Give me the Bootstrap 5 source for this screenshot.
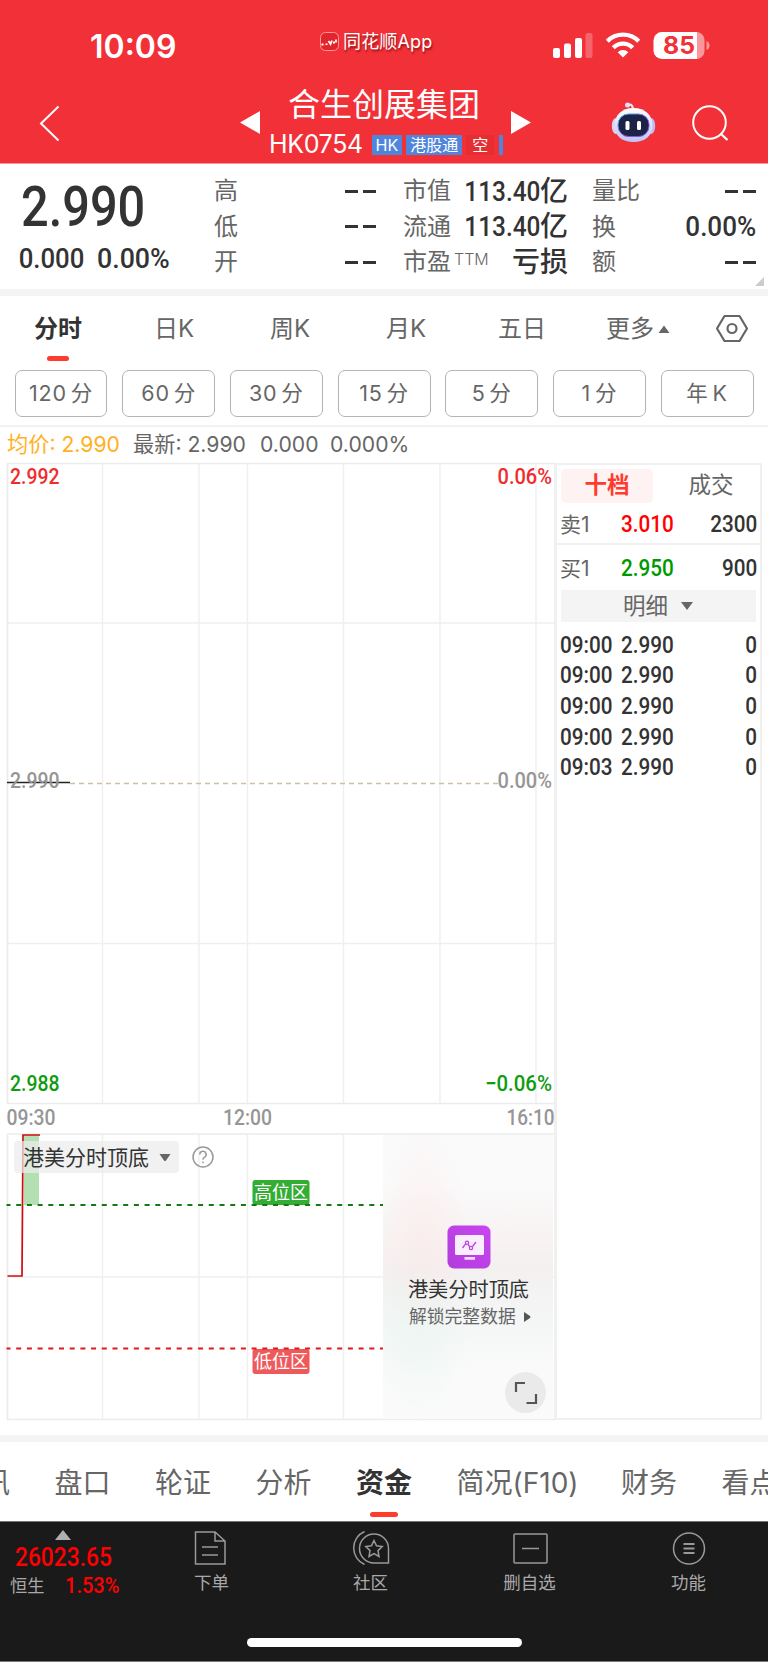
<!DOCTYPE html>
<html lang="zh-CN">
<head>
<meta charset="utf-8">
<meta name="viewport" content="width=device-width, initial-scale=1">
<title>合生创展集团 HK0754</title>
<link rel="stylesheet" href="https://cdn.jsdelivr.net/npm/bootstrap@5.3.0/dist/css/bootstrap.min.css">
<script src="https://cdn.jsdelivr.net/npm/bootstrap@5.3.0/dist/js/bootstrap.bundle.min.js"></script>
<style>
body{width:768px;height:1662px;overflow:hidden;background:#fff;color:#666;font-family:Inter,"Noto Sans CJK SC",sans-serif;line-height:1;white-space:nowrap}
svg{display:block;flex:none;overflow:visible}
.ink{color:#333}
.din{font-family:Roboto,"Noto Sans CJK SC",sans-serif;font-weight:500;display:inline-block;transform:scaleX(.87);transform-origin:left center}
.din-end{transform-origin:right center}
.din-pct{transform:scaleX(.93)}
.hdr{height:164px;background:#f23038;border-bottom:1px solid #f9969a}
.status{height:84px;padding-top:24px}
.clock{width:229px;margin-left:90px;font-size:32px;font-weight:600;height:45px;line-height:45px}
.appname{font-size:18px;line-height:28px;width:210px;letter-spacing:.15px;padding-top:4px;text-shadow:1px 2px 2px rgba(90,0,0,.6)}
.appicon{margin-top:1px}
.navrow{height:79px}
.titleblk{width:251px}
.stock{font-size:32px;line-height:42px;margin-left:-3px}
.coderow{padding:6px 0 0 9px}
.code{font-size:25px;letter-spacing:-.35px;width:102.5px}
.tag{height:20px;line-height:20px;font-size:16px;background:#4f86dc;margin-right:4px;text-align:center}
.tag-red{background:#e62d32;padding:0 6px;margin-right:5px}
.tag-cut{width:3.500px}
.quote{height:125px}
.last{font-size:56px;line-height:64px;margin-top:10px}
.chg{font-size:28px;line-height:30px;margin-top:5px}
.chg .din{transform:scaleX(.92)}
.chg .din+.din{transform:scaleX(.955)}
.qcol{padding-top:9.5px;font-size:24px}
.qcol>div{height:35.5px}
.val{font-size:28px;font-weight:500;color:#333}
.dash{width:31px;height:3px;background:linear-gradient(90deg,#333 0 13px,transparent 13px 18px,#333 18px)}
.ttm{font-size:16px;font-weight:300;margin:1px 0 0 3px;line-height:16px}
.corner{right:4px;bottom:3px}
.band{height:7px;background:#f4f4f4}
.periods{height:66px;font-size:24px}
.periods>div{width:116px;flex:none}
.more{padding-left:26px}
.on{color:#333;font-weight:700}
.bar-on::after{content:"";position:absolute;left:50%;margin-left:-11px;width:22px;height:5.5px;border-radius:3px;background:#ff3b30}
.periods .bar-on::after{bottom:1px}
.pills{padding:8px 14.5px 0;gap:14.7px;height:63px}
.pill{height:47px;border:1.3px solid #b4b4b4;border-radius:7px;font-size:21.5px;letter-spacing:.8px;word-spacing:-3px}
.info{height:38px;border-top:2px solid #f2f2f2;padding-left:7px;font-size:21.200px}
.avg{color:#ffb01e}
.chartbox{width:554px;height:960px}
.chartbox text{font-family:Roboto,"Noto Sans CJK SC",sans-serif}
.side{width:208px;height:957px;border:2px solid #f0f0f0;border-left-width:3px;font-size:21px}
.seg{height:40px;padding:3.5px 0 0 4px;font-size:22.5px;gap:12px}
.seg>div{width:92px;flex:none;height:34px;border-radius:5px}
.seg .sel{background:#fff2f2;color:#ff3b30;font-weight:700}
.lvl{height:38px;padding:0 3px 0 3px}
.n{font-size:23px;color:#333;transform:scaleX(.9)}
.lvl>span:first-child,.tick>span:first-child{width:61px}
.rule{height:2px;background:#f0f0f0}
.detail{height:32px;margin:3px 4px 0;background:#f4f4f4;font-size:22.5px}
.tick{height:30.6px;padding:0 3px 0 3px}
.up{color:#f00}.down{color:#090}
.picker{left:14px;top:678px;width:165px;height:32px;border-radius:4px;background:rgba(235,235,235,.72);font-size:21px;padding-left:9px;color:#333}
.help{left:192px;top:683px}
.lock{left:383px;top:672px;width:170px;height:284px;padding-top:90px;
background:radial-gradient(ellipse 45px 110px at 40px 95px,rgba(255,220,220,.28),transparent),radial-gradient(ellipse 50px 80px at 35px 205px,rgba(218,242,232,.3),transparent),linear-gradient(180deg,#fafafa 0 18%,#f8f2f2 38%,#f4f0f0 47%,#f2f3f2 55%,#f5f7f6 68%,#fafafa 85%)}
.lock-t{font-size:20.2px;margin-top:10px;height:23px;margin-left:1px}
.lock-s{font-size:17.8px;margin:4px 0 0 26px;height:22px}
.expand{left:505px;top:909px}
.sections{height:79px;gap:44.5px;font-size:28px;margin-left:-46px;padding-top:2px}
.sections>span{height:77px}
.sections .bar-on::after{bottom:4px;width:28px;margin-left:-14px}
.wide{margin-right:-2px}
.foot{height:141px;background:#1a1a1a;color:#a9a9a9;border-top:1px solid #777;border-bottom:1px solid #777}
.idx{width:132px;color:#f00}
.idx-n{font-size:25px;line-height:26px;margin:5px 0 0 15px;transform:scaleX(.91)}
.idx-s{font-size:17.3px;color:#a9a9a9}
.idx-s>span:first-child{width:65px;padding-left:10px}
.idx-s .din{font-size:22px;transform:scaleX(.91)}
.item{width:159px;font-size:17.5px;padding-top:8px}
.item svg{height:36px;margin-bottom:8px}
.homebar{width:275px;height:9px;border-radius:5px;background:#fff;margin:1px auto 0 247px}
</style>
</head>
<body>
<header class="hdr text-white">
  <div class="status d-flex align-items-start">
    <div class="clock">10:09</div>
    <div class="d-flex align-items-center">
      <svg class="appicon" width="24" height="28" viewBox="0 0 24 28" fill="none"><rect x="1.500" y="5.500" width="18" height="18" rx="5" stroke="#ff9a9a" fill="#e3242b"/><path d="M2.500 17.500h2M6.500 17.500l2-.500M9.500 14l2 3 1.500-3.500M14 15.500h2M17 12.500v3" stroke="#fff" stroke-width="1.800"/></svg>
      <span class="appname">同花顺App</span>
    </div>
    <svg width="160" height="40" viewBox="553 24 160 40" fill="#fff">
      <rect x="553" y="48" width="7" height="10" rx="2"/><rect x="564" y="43.500" width="7" height="14.500" rx="2"/><rect x="575" y="38" width="7" height="20" rx="2"/><rect x="585.500" y="33" width="7" height="25" rx="2" opacity=".25"/>
      <path d="M623 57.500l-5.300-5.300a7.500 7.500 0 0 1 10.600 0z"/>
      <g fill="none" stroke="#fff" stroke-width="4.300"><path d="M613.300 47.700a13.600 13.600 0 0 1 19.400 0"/><path d="M607.300 41.200a22 22 0 0 1 31.400 0"/></g>
      <path d="M662 32h35v27h-35a8.500 8.500 0 0 1-8.500-8.500v-10a8.500 8.500 0 0 1 8.500-8.500z"/><path d="M697 32a8 8 0 0 1 7.500 8v11a8 8 0 0 1-7.500 8z" opacity=".5"/><path d="M706.500 41q3 1 3 4.500t-3 4.500z" opacity=".5"/>
      <text x="663" y="54" font-size="24" font-weight="700" fill="#f23038" textLength="32" lengthAdjust="spacingAndGlyphs">85</text>
    </svg>
  </div>
  <div class="navrow d-flex">
    <svg width="240" height="70" viewBox="0 84 240 70"><path d="M58.500 106.500L41 123.500l17.500 17" fill="none" stroke="#fff" stroke-width="2"/></svg>
    <svg width="20" height="70" viewBox="240 84 20 70"><path d="M240 122.500l20-11.500v23z" fill="#fff"/></svg>
    <div class="titleblk">
      <div class="stock text-center">合生创展集团</div>
      <div class="coderow d-flex align-items-center">
        <span class="code">HK0754</span><span class="tag px-1">HK</span><span class="tag px-1">港股通</span><span class="tag tag-red">空</span><span class="tag tag-cut"></span>
      </div>
    </div>
    <svg width="101" height="70" viewBox="511 84 101 70"><path d="M531 122.500l-20-11.500v23z" fill="#fff"/></svg>
    <svg width="81" height="70" viewBox="612 84 81 70">
      <defs><linearGradient id="shell" x1="0" y1="0" x2="0" y2="1"><stop offset="0" stop-color="#fff"/><stop offset="1" stop-color="#bfc3f2"/></linearGradient><linearGradient id="rim" x1="0" y1="0" x2="1" y2="1"><stop offset="0" stop-color="#35c9e8"/><stop offset=".6" stop-color="#9a4cf0"/><stop offset="1" stop-color="#5b5cf5"/></linearGradient></defs>
      <path d="M627 105.500q5-3 6 3" fill="none" stroke="#e6e6fa" stroke-width="2.200"/><circle cx="627.500" cy="105" r="2.500" fill="#e2e0fa"/>
      <ellipse cx="616" cy="126" rx="4.200" ry="8" fill="#d5d4f7"/><ellipse cx="651" cy="126" rx="4.200" ry="8" fill="#b9bdf2"/>
      <path d="M633.500 108c12 0 19 7.500 19 17.500s-7 16.500-19 16.500-19-6.500-19-16.500 7-17.500 19-17.500z" fill="url(#shell)"/>
      <rect x="618" y="114" width="31" height="22.500" rx="10.500" fill="#1d2247" stroke="url(#rim)" stroke-width="1"/>
      <rect x="625.500" y="121" width="4" height="9" rx="1.500" fill="#fff"/><rect x="637" y="121" width="4" height="9" rx="1.500" fill="#fff"/>
    </svg>
    <svg width="40" height="70" viewBox="693 84 40 70" fill="none" stroke="#fff" stroke-width="2"><circle cx="709.500" cy="122.500" r="16.300"/><path d="M720.500 133.500l7 6.500" stroke-width="2.300"/></svg>
  </div>
</header>

<section class="quote d-flex position-relative">
  <div class="ink ps-3" style="width:214px">
    <div class="last"><span class="din">&#8202;2.990</span></div>
    <div class="chg d-flex"><span class="din" style="width:81px">&#8202;0.000</span><span class="din">0.00%</span></div>
  </div>
  <div class="qcol" style="width:162px">
    <div class="d-flex align-items-center justify-content-between"><span>高</span><i class="dash"></i></div>
    <div class="d-flex align-items-center justify-content-between"><span>低</span><i class="dash"></i></div>
    <div class="d-flex align-items-center justify-content-between"><span>开</span><i class="dash"></i></div>
  </div>
  <div class="qcol" style="width:165px;margin-left:27px">
    <div class="d-flex align-items-center justify-content-between"><span>市值</span><span class="val"><span class="din din-end">113.40</span>亿</span></div>
    <div class="d-flex align-items-center justify-content-between"><span>流通</span><span class="val"><span class="din din-end">113.40</span>亿</span></div>
    <div class="d-flex align-items-center justify-content-between"><span class="d-flex">市盈<span class="ttm">TTM</span></span><span class="val">亏损</span></div>
  </div>
  <div class="qcol" style="width:164px;margin-left:24px">
    <div class="d-flex align-items-center justify-content-between"><span>量比</span><i class="dash"></i></div>
    <div class="d-flex align-items-center justify-content-between"><span>换</span><span class="val din din-end din-pct">0.00%</span></div>
    <div class="d-flex align-items-center justify-content-between"><span>额</span><i class="dash"></i></div>
  </div>
  <svg class="corner position-absolute" width="9" height="9"><path d="M9 0v9H0z" fill="#ccc"/></svg>
</section>
<div class="band"></div>

<nav class="periods d-flex">
  <div class="on bar-on position-relative d-flex align-items-center justify-content-center">分时</div>
  <div class="d-flex align-items-center justify-content-center">日K</div>
  <div class="d-flex align-items-center justify-content-center">周K</div>
  <div class="d-flex align-items-center justify-content-center">月K</div>
  <div class="d-flex align-items-center justify-content-center">五日</div>
  <div class="more d-flex align-items-center">更多<svg class="ms-1" width="12" height="9"><path d="M.5 8L6 .5 11.500 8z" fill="#666"/></svg></div>
  <svg width="58" height="66" viewBox="696 296 58 66" fill="none" stroke="#666" stroke-width="2.200"><path d="M724.500 316h15l7.500 12.500-7.500 12.500h-15l-7.500-12.500z" stroke-linejoin="round"/><circle cx="732" cy="328.500" r="4.500"/></svg>
</nav>
<div class="pills d-flex">
  <div class="pill flex-fill w-100 d-flex align-items-center justify-content-center">120 分</div>
  <div class="pill flex-fill w-100 d-flex align-items-center justify-content-center">60 分</div>
  <div class="pill flex-fill w-100 d-flex align-items-center justify-content-center">30 分</div>
  <div class="pill flex-fill w-100 d-flex align-items-center justify-content-center">15 分</div>
  <div class="pill flex-fill w-100 d-flex align-items-center justify-content-center">5 分</div>
  <div class="pill flex-fill w-100 d-flex align-items-center justify-content-center">1 分</div>
  <div class="pill flex-fill w-100 d-flex align-items-center justify-content-center">年 K</div>
</div>
<div class="info d-flex align-items-center">
  <span class="avg" style="width:126px">均价: 2.990</span><span style="width:127px">最新: 2.990</span><span style="width:70px">0.000</span><span>0.000%</span>
</div>

<main class="d-flex" style="height:972px">
  <div class="chartbox position-relative">
    <svg width="554" height="960" viewBox="0 463 554 960" fill="none">
      <g stroke="#efefef" stroke-width="1.400">
        <path d="M102.500 463v640M199 463v640M247.500 463v640M343.500 463v640M440 463v640M536 463v640M7 623h547M7 943.500h547"/>
        <path d="M102.500 1134v285M199 1134v285M247.500 1134v285M343.500 1134v285M7 1277h547"/>
        <path d="M7.500 1103.500V463.500H554M7.500 1103.500H554M7.500 1134H554M7.500 1134V1419.500H554" stroke="#ececec" stroke-width="1.700"/>
      </g>
      <path d="M70 783.500H498" stroke="#cdbfa6" stroke-width="1.300" stroke-dasharray="5 4"/>
      <path d="M7 782.500h63" stroke="#222" stroke-width="1.700"/>
      <g font-size="21.800" font-weight="500">
        <g fill="#f02c2c"><text x="10" y="483.500" textLength="49.500" lengthAdjust="spacingAndGlyphs">2.992</text><text x="497.500" y="483.500" textLength="54.500" lengthAdjust="spacingAndGlyphs">0.06%</text></g>
        <g fill="#969696"><text x="10" y="787.500" textLength="49.500" lengthAdjust="spacingAndGlyphs">2.990</text><text x="497.500" y="787.500" textLength="54.500" lengthAdjust="spacingAndGlyphs">0.00%</text>
        <text x="6.500" y="1125" textLength="49" lengthAdjust="spacingAndGlyphs">09:30</text><text x="223" y="1125" textLength="49" lengthAdjust="spacingAndGlyphs">12:00</text><text x="506.500" y="1125" textLength="48" lengthAdjust="spacingAndGlyphs">16:10</text></g>
        <g fill="#109c10"><text x="10" y="1091" textLength="49.500" lengthAdjust="spacingAndGlyphs">2.988</text><text x="485" y="1091" textLength="67" lengthAdjust="spacingAndGlyphs">−0.06%</text></g>
      </g>
      <path d="M24 1135h15v70H24z" fill="#b2e0b2"/>
      <path d="M7.500 1276H22L23 1135h17" stroke="#d00c0c" stroke-width="1.700"/>
      <rect x="252.500" y="1180" width="57" height="25" rx="3" fill="#33ad33"/><rect x="252.500" y="1349" width="57" height="25" rx="3" fill="#ee5a5c"/>
      <g fill="#fff" font-size="18"><text x="254" y="1199">高位区</text><text x="254" y="1368">低位区</text></g>
      <path d="M6.500 1205H383" stroke="#137a13" stroke-width="1.800" stroke-dasharray="5 5.700" stroke-dashoffset="1"/>
      <path d="M6.500 1348.500H383" stroke="#e01818" stroke-width="1.800" stroke-dasharray="5 5.700" stroke-dashoffset="1"/>
    </svg>
    <div class="picker position-absolute d-flex align-items-center">港美分时顶底<svg class="ms-2" width="18" height="9"><path d="M2.500 1h11L9 7.500q-1 1-2 0z" fill="#666"/></svg></div>
    <svg class="help position-absolute" width="22" height="22" fill="none" stroke="#999" stroke-width="1.500"><circle cx="11" cy="11" r="10"/><path d="M7.800 8.500a3.200 3.200 0 1 1 4.600 2.900q-1.400.8-1.400 2.400M11 15.500v1.800"/></svg>
    <div class="lock position-absolute">
      <svg class="ms-auto me-auto position-relative" width="44" height="44" viewBox="-1 0 44 44" fill="none"><defs><linearGradient id="vio" x1="1" y1="0" x2="0" y2="1"><stop stop-color="#c846f0"/><stop offset="1" stop-color="#b23cdc"/></linearGradient></defs><rect x=".5" y=".5" width="43" height="43" rx="6.500" fill="url(#vio)"/><rect x="8" y="10" width="29" height="20" rx="1.500" fill="#faeefe"/><path d="M17.500 32h10.500v2.800H17.500z" fill="#f3d9fb"/><g stroke="#bd45e2" stroke-width="1.300"><path d="M15.500 23l3.300-4.300M21 19.500l2 2.500M25.500 21.500l3.500-4.500"/><circle cx="20" cy="17.800" r="1.600"/><circle cx="24" cy="23" r="1.600"/></g></svg>
      <div class="lock-t ink d-flex align-items-center justify-content-center">港美分时顶底</div>
      <div class="lock-s d-flex align-items-center">解锁完整数据<svg class="ms-2" width="8" height="12"><path d="M0 1v10l6-4q1-1 0-2z" fill="#555"/></svg></div>
    </div>
    <svg class="expand position-absolute" width="41" height="41" fill="none"><circle cx="20.500" cy="20.500" r="20.500" fill="#eaeaea"/><path d="M11 20v-9h9M31 22v9h-9.500" stroke="#555" stroke-width="2.200"/></svg>
  </div>
  <aside class="side">
    <div class="seg d-flex">
      <div class="sel d-flex align-items-center justify-content-center">十档</div><div class="d-flex align-items-center justify-content-center">成交</div>
    </div>
    <div class="lvl d-flex align-items-center"><span>卖1</span><span class="din n up">3.010</span><span class="din din-end n ms-auto">2300</span></div>
    <div class="rule"></div>
    <div class="lvl d-flex align-items-center mt-1"><span>买1</span><span class="din n down">2.950</span><span class="din din-end n ms-auto">900</span></div>
    <div class="detail d-flex align-items-center justify-content-center">明细<svg class="ms-2" width="18" height="10"><path d="M5 1h12l-6 8z" fill="#666"/></svg></div>
    <div style="height:8px"></div>
    <div class="tick d-flex align-items-center"><span class="din n">09:00</span><span class="din n">2.990</span><span class="din din-end n ms-auto">0</span></div>
    <div class="tick d-flex align-items-center"><span class="din n">09:00</span><span class="din n">2.990</span><span class="din din-end n ms-auto">0</span></div>
    <div class="tick d-flex align-items-center"><span class="din n">09:00</span><span class="din n">2.990</span><span class="din din-end n ms-auto">0</span></div>
    <div class="tick d-flex align-items-center"><span class="din n">09:00</span><span class="din n">2.990</span><span class="din din-end n ms-auto">0</span></div>
    <div class="tick d-flex align-items-center"><span class="din n">09:03</span><span class="din n">2.990</span><span class="din din-end n ms-auto">0</span></div>
  </aside>
</main>
<div class="band"></div>

<nav class="sections d-flex">
  <span class="d-flex align-items-center">资讯</span><span class="d-flex align-items-center">盘口</span><span class="d-flex align-items-center">轮证</span><span class="d-flex align-items-center">分析</span><span class="on bar-on position-relative d-flex align-items-center">资金</span><span class="wide d-flex align-items-center">简况(F10)</span><span class="d-flex align-items-center">财务</span><span class="d-flex align-items-center">看点</span>
</nav>
<footer class="foot">
  <div class="d-flex" style="height:115px">
    <div class="idx">
      <svg width="131" height="18"><path d="M55 18l8-10 8 10z" fill="#b0b0b0"/></svg>
      <div class="idx-n din">26023.65</div>
      <div class="idx-s d-flex align-items-center pt-1"><span>恒生</span><span class="din up">1.53%</span></div>
    </div>
    <div class="item d-flex flex-column align-items-center"><svg width="38" height="36" viewBox="1 0 38 36" fill="none" stroke="#999" stroke-width="1.500"><path d="M23 2H3.500v32h29.500V11zM23 2v9h10M10 17h16M10 25h16"/></svg>下单</div>
    <div class="item d-flex flex-column align-items-center"><svg width="38" height="36" viewBox="0 0 38 36" fill="none" stroke="#999" stroke-width="1.500"><path d="M12.500 1.500a18 18 0 0 0 0 33M22 33a14.500 14.500 0 1 1 14.500-14.500V33z"/><path d="M22 10.500l2.500 5.300 5.700.8-4.200 4 1 5.900-5-2.800-5 2.800 1-5.900-4.200-4 5.700-.8z"/></svg>社区</div>
    <div class="item d-flex flex-column align-items-center"><svg width="36" height="36" viewBox="0 0 36 36" fill="none" stroke="#999" stroke-width="1.500"><rect x="2" y="4" width="33" height="29" rx="1"/><path d="M10 18.500h17"/></svg>删自选</div>
    <div class="item d-flex flex-column align-items-center"><svg width="36" height="36" viewBox="0 0 36 36" fill="none" stroke="#999" stroke-width="1.500"><circle cx="18" cy="18.500" r="15.500"/><path d="M12.500 14h11M12.500 18.500h11M12.500 23h11" stroke-width="1.800"/></svg>功能</div>
  </div>
  <div class="homebar"></div>
</footer>
</body>
</html>
